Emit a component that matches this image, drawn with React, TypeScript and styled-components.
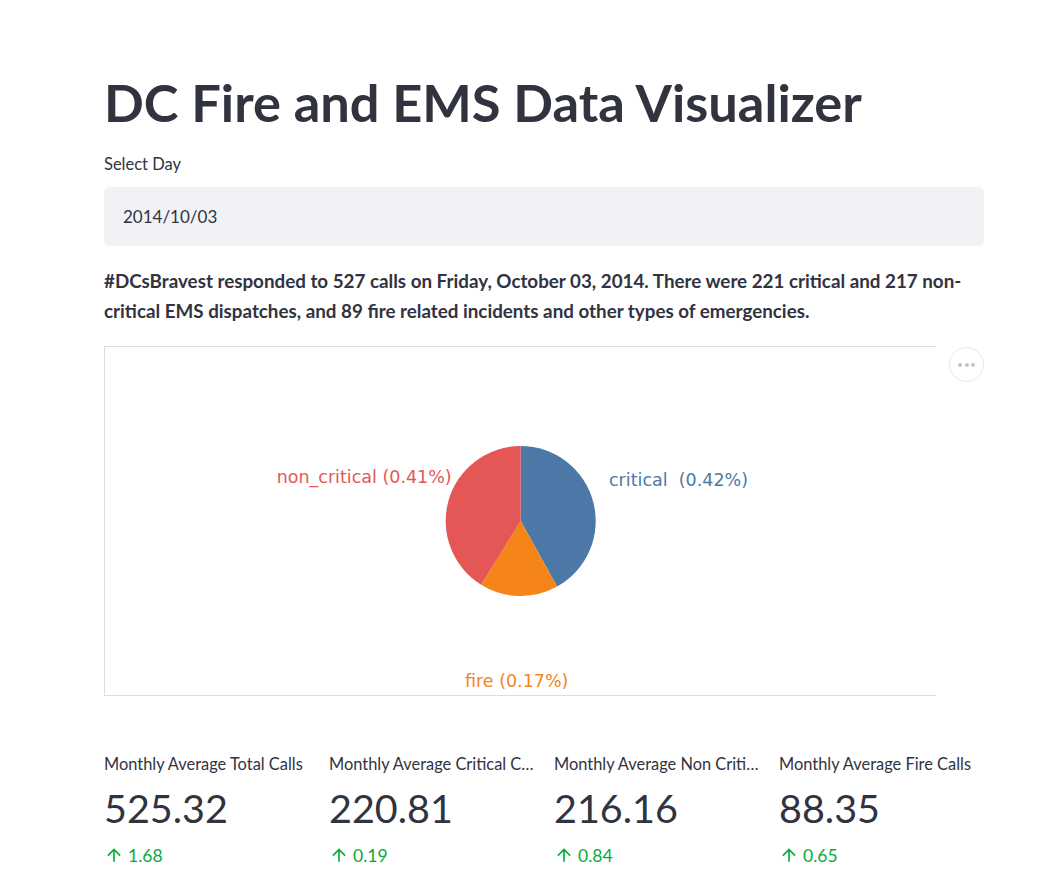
import React from "react";
import styled, { createGlobalStyle } from "styled-components";

const GlobalStyle = createGlobalStyle`
  html, body { margin: 0; padding: 0; background: #ffffff; }
  body { font-family: "Lato", "Noto Sans", sans-serif; color: #31333f; }
`;

const Main = styled.main`
  width: 880px;
  margin-left: 104px;
  padding-bottom: 20px;
  display: flex;
  flex-direction: column;
`;

const Title = styled.h1`
  margin: 72px 0 0;
  height: 60px;
  line-height: 60px;
  font-size: 52.4px;
  font-weight: 700;
  color: #31333f;
  white-space: nowrap;
`;

const Field = styled.div`
  margin-top: 20px;
  display: flex;
  flex-direction: column;
  gap: 11px;
`;

const FieldLabel = styled.label`
  height: 24px;
  line-height: 24px;
  font-size: 16.5px;
`;

const DateInput = styled.div`
  height: 59px;
  box-sizing: border-box;
  padding-left: 19px;
  display: flex;
  align-items: center;
  background: #f0f2f6;
  border-radius: 6px;
  font-size: 17px;
`;

const Summary = styled.p`
  margin: 20px 0 0;
  font-size: 18.8px;
  font-weight: 700;
  line-height: 30px;
`;

const ChartWrap = styled.div`
  position: relative;
  margin-top: 20px;
  height: 350px;
`;

const ChartFrame = styled.div`
  width: 832px;
  height: 350px;
  box-sizing: border-box;
  border-left: 1px solid #dddddd;
  border-top: 1px solid #dddddd;
  border-bottom: 1px solid #dddddd;
  svg { display: block; }
`;

const MenuButton = styled.button`
  position: absolute;
  top: 1px;
  right: 0;
  width: 35px;
  height: 35px;
  padding: 0;
  border-radius: 50%;
  border: 1px solid #e8e8e8;
  background: #ffffff;
  display: flex;
  align-items: center;
  justify-content: center;
  gap: 2.5px;
`;

const Dot = styled.span`
  width: 4px;
  height: 4px;
  border-radius: 50%;
  background: #c4c4c4;
`;

const Metrics = styled.div`
  margin-top: 56px;
  display: grid;
  grid-template-columns: repeat(4, 1fr);
  gap: 20px;
`;

const Metric = styled.div`
  display: flex;
  flex-direction: column;
  min-width: 0;
`;

const MetricLabel = styled.div`
  height: 24px;
  line-height: 24px;
  font-size: 16.4px;
  white-space: nowrap;
  overflow: hidden;
  text-overflow: ellipsis;
`;

const MetricValue = styled.div`
  margin-top: 4px;
  height: 56px;
  line-height: 56px;
  font-size: 39.5px;
  font-weight: 400;
`;

const Delta = styled.div`
  margin-top: 7px;
  height: 24px;
  display: flex;
  align-items: center;
  gap: 4px;
  color: #09ab3b;
  font-size: 17.5px;
  svg { flex: none; }
`;

const PieLabel = styled.text`
  font-family: "DejaVu Sans", sans-serif;
  font-size: 17.5px;
`;

const slices = [
  { key: "critical", value: 221, color: "#4c78a8" },
  { key: "fire", value: 89, color: "#f58518" },
  { key: "non_critical", value: 217, color: "#e45756" },
];

const CX = 415.7;
const CY = 174;
const R = 75;

function slicePath(a0: number, a1: number) {
  const p = (a: number) => [CX + R * Math.sin(a), CY - R * Math.cos(a)];
  const [x0, y0] = p(a0);
  const [x1, y1] = p(a1);
  const large = a1 - a0 > Math.PI ? 1 : 0;
  return `M${CX},${CY} L${x0},${y0} A${R},${R} 0 ${large} 1 ${x1},${y1} Z`;
}

function PieChart() {
  const total = slices.reduce((s, d) => s + d.value, 0);
  let acc = 0;
  const paths = slices.map((d) => {
    const a0 = (acc / total) * Math.PI * 2;
    acc += d.value;
    const a1 = (acc / total) * Math.PI * 2;
    return <path key={d.key} d={slicePath(a0, a1)} fill={d.color} />;
  });
  return (
    <svg width="831" height="348" viewBox="0 0 831 348">
      {paths}
      <PieLabel x={346.7} y={135.5} textAnchor="end" fill="#e45756">
        non_critical (0.41%)
      </PieLabel>
      <PieLabel x={504} y={138.5} fill="#4c78a8" xmlSpace="preserve">
        {"critical  (0.42%)"}
      </PieLabel>
      <PieLabel x={360} y={339.5} fill="#f58518">
        fire (0.17%)
      </PieLabel>
    </svg>
  );
}

const ArrowUp = () => (
  <svg width="20" height="20" viewBox="0 0 24 24" fill="#09ab3b">
    <path d="M4 12l1.41 1.41L11 7.83V20h2V7.83l5.58 5.59L20 12l-8-8-8 8z" />
  </svg>
);

const metrics = [
  { label: "Monthly Average Total Calls", value: "525.32", delta: "1.68" },
  { label: "Monthly Average Critical Calls", value: "220.81", delta: "0.19" },
  { label: "Monthly Average Non Critical Calls", value: "216.16", delta: "0.84" },
  { label: "Monthly Average Fire Calls", value: "88.35", delta: "0.65" },
];

export default function App() {
  return (
    <>
      <GlobalStyle />
      <Main>
        <Title>DC Fire and EMS Data Visualizer</Title>
        <Field>
          <FieldLabel>Select Day</FieldLabel>
          <DateInput>2014/10/03</DateInput>
        </Field>
        <Summary>
          #DCsBravest responded to 527 calls on Friday, October 03, 2014. There were 221 critical and 217 non-critical EMS dispatches, and 89 fire related incidents and other types of emergencies.
        </Summary>
        <ChartWrap>
          <ChartFrame>
            <PieChart />
          </ChartFrame>
          <MenuButton aria-label="menu">
            <Dot />
            <Dot />
            <Dot />
          </MenuButton>
        </ChartWrap>
        <Metrics>
          {metrics.map((m) => (
            <Metric key={m.label}>
              <MetricLabel>{m.label}</MetricLabel>
              <MetricValue>{m.value}</MetricValue>
              <Delta>
                <ArrowUp />
                {m.delta}
              </Delta>
            </Metric>
          ))}
        </Metrics>
      </Main>
    </>
  );
}
